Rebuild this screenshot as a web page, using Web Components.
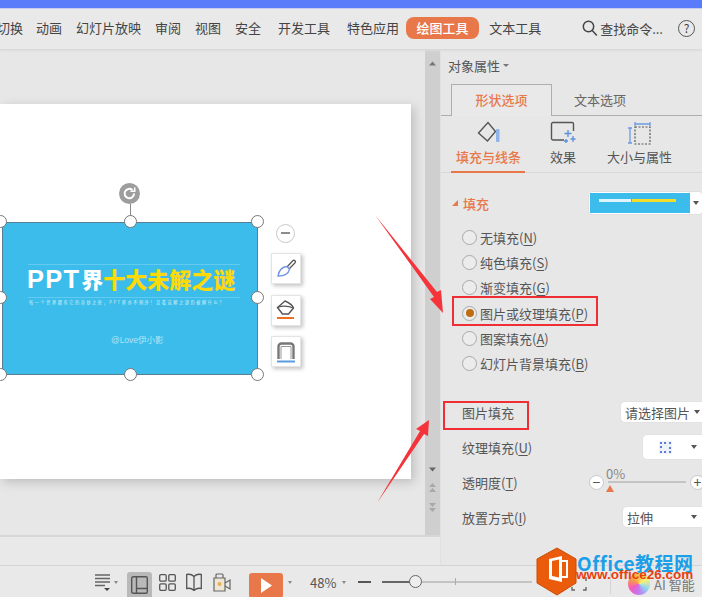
<!DOCTYPE html>
<html>
<head>
<meta charset="utf-8">
<style>
  html, body { margin: 0; padding: 0; background: #e7e7e7; }
  body { font-family: "Noto Sans CJK SC", "Noto Sans", sans-serif; color: #444; }
</style>
</head>
<body>
<wps-app>
  <ribbon-bar slot="ribbon"></ribbon-bar>
  <slide-canvas slot="canvas"></slide-canvas>
  <scroll-rail slot="rail"></scroll-rail>
  <property-panel slot="panel"></property-panel>
  <status-bar slot="status"></status-bar>
  <callout-layer slot="overlay"></callout-layer>
</wps-app>

<script>
const ORANGE = "#e8784a";

function define(name, html, setup) {
  const template = document.createElement("template");
  template.innerHTML = html;
  customElements.define(name, class extends HTMLElement {
    constructor() {
      super();
      const shadow = this.attachShadow({ mode: "open" });
      shadow.append(template.content.cloneNode(true));
      if (setup) setup(shadow, this);
    }
  });
}

define("wps-app", `
  <style>
    :host { display: flex; flex-direction: column; width: 702px; height: 597px; overflow: hidden; position: relative; background: #e7e7e7; }
    .title { height: 9px; flex: none; background: #5a7cfb; border-bottom: 1px solid #c4cdf0; box-sizing: border-box; }
    .main { display: flex; height: 515px; flex: none; }
    .left { width: 440px; flex: none; display: flex; flex-direction: column; }
    .work { display: flex; height: 485px; flex: none; }
    .notes { flex: 1; border-top: 2px solid #d6d6d6; background: #e9e9e9; }
  </style>
  <div class="title"></div>
  <slot name="ribbon"></slot>
  <div class="main">
    <div class="left">
      <div class="work"><slot name="canvas"></slot><slot name="rail"></slot></div>
      <div class="notes"></div>
    </div>
    <slot name="panel"></slot>
  </div>
  <slot name="status"></slot>
  <slot name="overlay"></slot>
`);

define("ribbon-bar", `
  <style>
    :host { display: flex; align-items: center; height: 41px; flex: none; box-sizing: border-box; padding-bottom: 2px; background: #e9e9e9; border-bottom: 1px solid #d9d9d9; box-shadow: 0 1px 2px #dcdcdc; font-size: 13px; color: #444; position: relative; white-space: nowrap; }
    .tabs { display: flex; align-items: center; margin-left: -3px; }
    .tabs span { display: block; line-height: 18px; }
    .pill { background: ${ORANGE}; color: #fff; border-radius: 8px; height: 22px; line-height: 22px !important; padding: 0 10.5px; font-weight: 500; }
    .search { display: flex; align-items: center; gap: 2px; margin-left: 41px; }
    .help { margin-left: 15px; width: 17px; height: 17px; border: 1.5px solid #555; border-radius: 50%; box-sizing: border-box; font-size: 12px; line-height: 14px; text-align: center; }
    svg { display: block; }
  </style>
  <div class="tabs">
    <span style="width:25px">切换</span>
    <span style="margin-left:14px">动画</span>
    <span style="margin-left:14px">幻灯片放映</span>
    <span style="margin-left:14px">审阅</span>
    <span style="margin-left:14px">视图</span>
    <span style="margin-left:14px">安全</span>
    <span style="margin-left:17px">开发工具</span>
    <span style="margin-left:17px">特色应用</span>
    <span class="pill" style="margin-left:7px">绘图工具</span>
    <span style="margin-left:10px">文本工具</span>
  </div>
  <div class="search">
    <svg width="16" height="17" viewBox="0 0 16 17" fill="none" stroke="#444" stroke-width="1.5"><circle cx="6.5" cy="6.5" r="5.2"/><path d="M10.3 10.5l4.5 5"/></svg>
    <span>查找命令...</span>
  </div>
  <div class="help">?</div>
`);

define("shape-tool", `
  <style>
    :host { display: flex; width: 30px; height: 31px; align-items: center; justify-content: center; box-sizing: border-box; background: #fff; border: 1px solid #e4e4e4; box-shadow: 2px 2px 4px #c4c4c4; }
    svg { display: block; }
  </style>
  <slot></slot>
`);

define("slide-canvas", `
  <style>
    :host { display: block; width: 425px; flex: none; box-sizing: border-box; padding-top: 54px; background: #e7e7e7; }
    .slide { position: relative; width: 411px; height: 375px; background: #fff; box-shadow: 3px 3px 10px #bcbcbc; }
    .shape { position: absolute; left: 2px; top: 118px; width: 256px; height: 153px; box-sizing: border-box; background: #3bbcea; border: 1px solid #5a7f92; color: #fff; }
    .rule { position: absolute; left: 25px; width: 212px; height: 1px; background: #63cbef; }
    .headline { position: absolute; left: 24px; top: 41px; width: 225px; font-size: 22px; line-height: 28px; font-weight: 900; white-space: nowrap; font-family: "Noto Sans CJK SC", sans-serif; }
    .headline b { font-size: 25.5px; letter-spacing: 1.2px; font-family: "Liberation Sans", sans-serif; font-weight: 700; margin-right: 1px; }
    .headline i { font-style: normal; color: #fbd90a; }
    .sub { position: absolute; left: 26px; top: 76px; font-size: 4.2px; line-height: 6px; letter-spacing: 1.55px; white-space: nowrap; color: #d6f1fb; }
    .by { position: absolute; left: 108px; top: 111px; font-size: 8.5px; line-height: 12px; color: #b5e4f6; white-space: nowrap; font-family: "Liberation Sans", "Noto Sans CJK SC", sans-serif; }
    .dot { position: absolute; width: 13px; height: 13px; margin: -6.5px 0 0 -6.5px; border-radius: 50%; box-sizing: border-box; border: 1px solid #777; background: #fff; }
    .stem { position: absolute; left: 130px; top: 100px; width: 1px; height: 18px; background: #8a8a8a; }
    .rot { position: absolute; left: 119px; top: 79px; width: 21px; height: 21px; border-radius: 50%; background: #9d9d9d; }
    .minus { position: absolute; left: 276px; top: 120px; width: 19px; height: 19px; box-sizing: border-box; border: 1px solid #c9c9c9; border-radius: 50%; background: #fff; }
    .minus::after { content: ""; position: absolute; left: 4px; right: 4px; top: 7px; height: 2px; background: #8d8d8d; }
    .tools { position: absolute; left: 271px; top: 149px; display: flex; flex-direction: column; gap: 10.5px; }
  </style>
  <div class="slide">
    <div class="shape">
      <div class="rule" style="top:41px"></div>
      <div class="headline"><b>PPT</b>界<i>十大未解之谜</i></div>
      <div class="rule" style="top:74px"></div>
      <div class="sub">每一个世界都有它的奇妙之处，PPT界亦不例外！且看这解之谜仍被解什么？</div>
      <div class="by">@Love伊小影</div>
    </div>
    <div class="stem"></div>
    <div class="rot">
      <svg width="21" height="21" viewBox="0 0 21 21" fill="none" stroke="#fff" stroke-width="2"><path d="M15 10.5a4.7 4.7 0 1 1-1.6-3.5"/><path d="M11.5 8.2h4.2V4.4" stroke-width="1.6"/></svg>
    </div>
    <div class="dot" style="left:0;top:117px"></div>
    <div class="dot" style="left:130px;top:117px"></div>
    <div class="dot" style="left:257px;top:117px"></div>
    <div class="dot" style="left:0;top:193px"></div>
    <div class="dot" style="left:257px;top:193px"></div>
    <div class="dot" style="left:0;top:270px"></div>
    <div class="dot" style="left:130px;top:270px"></div>
    <div class="dot" style="left:257px;top:270px"></div>
    <div class="minus"></div>
    <div class="tools">
      <shape-tool>
        <svg width="22" height="22" viewBox="0 0 22 22" fill="none"><path d="M12 9l6-6.500a1.600 1.600 0 0 1 2.200 2.200L14 11" stroke="#555" stroke-width="1.300"/><path d="M12 8.500l2.500 2.800c-.8 3.700-4.700 6.500-11.500 6.700 1-5.500 4.300-9.300 9-9.500z" stroke="#6f93e6" stroke-width="1.300"/></svg>
      </shape-tool>
      <shape-tool>
        <svg width="22" height="22" viewBox="0 0 22 22" fill="none"><path d="M10 2L2.500 8.500l5 6.500h6l5-6c-1-3-4-5-8.500-7z" stroke="#555" stroke-width="1.400"/><path d="M2.500 8.500c5-2 11-1.500 16 .5" stroke="#555" stroke-width="1.200"/><path d="M2 19h17" stroke="#f0701e" stroke-width="2"/></svg>
      </shape-tool>
      <shape-tool>
        <svg width="22" height="24" viewBox="0 0 22 24" fill="none"><path d="M3.500 19V6.500a3 3 0 0 1 3-3h9a3 3 0 0 1 3 3V19" stroke="#777" stroke-width="2.400"/><path d="M6 19V6.500h10V19" stroke="#999" stroke-width="1"/><path d="M2 21.500h18" stroke="#5b9be0" stroke-width="2"/></svg>
      </shape-tool>
    </div>
  </div>
`);

define("scroll-rail", `
  <style>
    :host { display: flex; flex-direction: column; align-items: center; width: 15px; flex: none; background: #cfcfcf; padding-top: 11px; box-sizing: border-box; }
    svg { display: block; }
    .low { margin-top: auto; margin-bottom: 22px; display: flex; flex-direction: column; gap: 10.5px; align-items: center; }
  </style>
  <svg width="7" height="5" viewBox="0 0 7 5"><path d="M3.500 0.500L7 4.500H0z" fill="#777"/></svg>
  <div class="low">
    <svg width="7" height="5" viewBox="0 0 7 5"><path d="M3.500 4.500L7 .5H0z" fill="#666"/></svg>
    <svg width="7" height="10" viewBox="0 0 7 10"><path d="M3.500 0L7 4H0zM3.500 5L7 9H0z" fill="#a8a8a8"/></svg>
    <svg width="7" height="10" viewBox="0 0 7 10"><path d="M3.500 9L7 5H0zM3.500 4L7 0H0z" fill="#a8a8a8"/></svg>
  </div>
`);

define("fill-radio", `
  <style>
    :host { display: flex; align-items: center; height: 25.2px; gap: 3px; font-size: 13px; color: #555; white-space: nowrap; }
    .ring { width: 15px; height: 15px; box-sizing: border-box; border: 1.5px solid #a9a9a9; border-radius: 50%; background: #ececec; display: flex; align-items: center; justify-content: center; flex: none; }
    :host([checked]) .ring::after { content: ""; width: 8px; height: 8px; border-radius: 50%; background: #bf6d10; }
    ::slotted(u) { text-underline-offset: 2px; }
  </style>
  <span class="ring"></span>
  <span><slot></slot></span>
`);

define("drop-select", `
  <style>
    :host { display: flex; align-items: center; box-sizing: border-box; margin-right: -8px; height: 22px; background: #fff; border: 1px solid #e2e2e2; border-radius: 5px; font-size: 13px; color: #555; padding-left: 4px; white-space: nowrap; }
    .grow { flex: 1; display: flex; align-items: center; }
    .caret { width: 0; height: 0; border: 3.500px solid transparent; border-top: 4px solid #555; border-bottom: 0; margin: 0 12px 0 4px; }
  </style>
  <span class="grow"><slot></slot></span>
  <span class="caret"></span>
`);

define("prop-row", `
  <style>
    :host { display: flex; align-items: center; justify-content: space-between; font-size: 13px; color: #555; white-space: nowrap; }
    .ctl { display: block; }
  </style>
  <span><slot name="label"></slot></span>
  <span class="ctl"><slot></slot></span>
`);

define("opacity-slider", `
  <style>
    :host { display: block; position: relative; width: 116px; height: 26px; font-size: 13px; color: #888; margin-right: -3px; }
    .btn { position: absolute; top: 6px; width: 15px; height: 15px; box-sizing: border-box; background: #fff; border: 1px solid #c8c8c8; border-radius: 50%; color: #555; font-size: 14px; line-height: 12px; text-align: center; }
    .track { position: absolute; left: 19px; right: 19px; top: 12px; height: 2px; background: #c4c4c4; }
    .val { position: absolute; left: 17px; top: -3px; line-height: 16px; }
    .thumb { position: absolute; left: 17px; top: 16px; width: 0; height: 0; border: 4.500px solid transparent; border-bottom: 7px solid ${ORANGE}; border-top: 0; }
  </style>
  <span class="btn" style="left:0">−</span>
  <span class="track"></span>
  <span class="val">0%</span>
  <span class="thumb"></span>
  <span class="btn" style="right:0">+</span>
`);

define("property-panel", `
  <style>
    :host { display: block; width: 262px; flex: none; box-sizing: border-box; background: #e7e7e7; overflow: hidden; font-size: 13px; color: #555; border-left: 1px solid #e0e0e0; }
    .head { height: 34px; padding: 0 0 4px 7px; box-sizing: border-box; display: flex; align-items: center; gap: 3px; color: #555; }
    .caret { width: 0; height: 0; border: 3px solid transparent; border-top: 3.500px solid #777; border-bottom: 0; }
    .tabs { display: flex; height: 32px; border-bottom: 1px solid #aeaeae; box-sizing: border-box; }
    .tab { box-sizing: border-box; height: 32px; width: 101px; margin-left: 10px; border: 1px solid #aeaeae; border-bottom: 0; background: #e9e9e9; color: ${ORANGE}; text-align: center; line-height: 29px; font-weight: 500; }
    .tab2 { margin-left: 22px; line-height: 31px; color: #666; }
    .subs { display: flex; height: 57px; border-bottom: 1px solid #d8d8d8; box-sizing: border-box; position: relative; }
    .sub { display: flex; flex-direction: column; align-items: center; position: absolute; top: 5px; white-space: nowrap; line-height: 18px; }
    .sub svg { display: block; height: 24px; margin-bottom: 3px; }
    .on { color: ${ORANGE}; font-weight: 500; }
    .bar { position: absolute; left: 10px; width: 74px; bottom: -1px; height: 2px; background: ${ORANGE}; }
    .fill { display: flex; align-items: center; height: 24px; margin-top: 18px; padding-left: 11px; color: ${ORANGE}; font-weight: 500; white-space: nowrap; }
    .tri { width: 0; height: 0; border-left: 6px solid transparent; border-bottom: 6px solid ${ORANGE}; margin-right: 5px; flex: none; }
    .preview { display: flex; align-items: center; margin-left: 99px; width: 115px; height: 24px; flex: none; background: #fff; border: 1px solid #e0e0e0; border-radius: 4px; box-sizing: border-box; padding-left: 1px; }
    .thumb { position: relative; display: block; width: 100px; height: 20px; flex: none; background: #3bbcea; }
    .thumb span { position: absolute; top: 6px; height: 3px; }
    .pcaret { width: 0; height: 0; border: 3.500px solid transparent; border-top: 4px solid #555; border-bottom: 0; margin-left: 3px; flex: none; }
    .radios { margin: 10px 0 0 21px; }
    .rows { margin: 0 0 0 21px; display: grid; row-gap: 9px; padding-top: 23px; }
    .rows prop-row { height: 26px; }
    u { text-underline-offset: 2px; }
  </style>
  <div class="head">对象属性<span class="caret"></span></div>
  <div class="tabs">
    <div class="tab">形状选项</div>
    <div class="tab2">文本选项</div>
  </div>
  <div class="subs">
    <div class="sub on" style="left:15px">
      <svg width="24" height="24" viewBox="0 0 24 24" fill="none"><path d="M1.500 12L11 1.500l7.500 9-8 9.500z" stroke="#555" stroke-width="1.400"/><rect x="19" y="8" width="3.500" height="13" rx="1" fill="#8fb4ea"/></svg>
      填充与线条
    </div>
    <div class="sub" style="left:109px">
      <svg width="26" height="24" viewBox="0 0 26 24" fill="none"><path d="M14 19H3a1.500 1.500 0 0 1-1.500-1.500V3A1.500 1.500 0 0 1 3 1.500h19A1.500 1.500 0 0 1 23.500 3v7" stroke="#555" stroke-width="1.400"/><path d="M18 9v7M14.500 12.500h7M23 15v6M20.500 18h5M16 18v4M14 20h4" stroke="#5b8fe0" stroke-width="1.300"/></svg>
      效果
    </div>
    <div class="sub" style="left:166px">
      <svg width="24" height="24" viewBox="0 0 24 24" fill="none"><path d="M7 2h15M7 0v4M22 0v4" stroke="#6d9ae2" stroke-width="1.300" transform="translate(0 1)"/><path d="M2 7v15M0 7h4M0 22h4" stroke="#6d9ae2" stroke-width="1.300"/><rect x="7" y="6" width="15" height="17" stroke="#555" stroke-width="1.200" stroke-dasharray="2 1.500"/></svg>
      大小与属性
    </div>
    <div class="bar"></div>
  </div>
  <div class="fill">
    <span class="tri"></span>填充
    <span class="preview">
      <span class="thumb">
        <span style="left:9px;width:32px;background:#dff4fc"></span>
        <span style="left:42px;width:44px;background:#f4dc2a"></span>
      </span>
      <span class="pcaret"></span>
    </span>
  </div>
  <div class="radios">
    <fill-radio>无填充(<u>N</u>)</fill-radio>
    <fill-radio>纯色填充(<u>S</u>)</fill-radio>
    <fill-radio>渐变填充(<u>G</u>)</fill-radio>
    <fill-radio checked>图片或纹理填充(<u>P</u>)</fill-radio>
    <fill-radio>图案填充(<u>A</u>)</fill-radio>
    <fill-radio>幻灯片背景填充(<u>B</u>)</fill-radio>
  </div>
  <div class="rows">
    <prop-row><span slot="label">图片填充</span><drop-select style="width:90px">请选择图片</drop-select></prop-row>
    <prop-row><span slot="label">纹理填充(<u>U</u>)</span>
      <drop-select style="width:68px;height:26px">
        <svg width="13" height="13" viewBox="0 0 13 13" style="margin-left:12px"><rect width="13" height="13" fill="#eef2fb"/><path d="M1 1h2v2H1zM5 1h2v2H5zM10 1h2v2h-2zM1 5h2v2H1zM10 6h2v2h-2zM1 10h2v2H1zM5 10h2v2H5zM10 10h2v2h-2z" fill="#5b7fd8"/></svg>
      </drop-select>
    </prop-row>
    <prop-row><span slot="label">透明度(<u>T</u>)</span><opacity-slider></opacity-slider></prop-row>
    <prop-row><span slot="label">放置方式(<u>I</u>)</span><drop-select style="width:88px">拉伸</drop-select></prop-row>
  </div>
`);

define("status-bar", `
  <style>
    :host { display: flex; align-items: center; height: 33px; flex: none; box-sizing: border-box; background: #e9e9e9; border-top: 1px solid #d4d4d4; padding: 0 0 0 95px; font-size: 13px; color: #555; white-space: nowrap; position: relative; }
    svg { display: block; flex: none; }
    .small { width: 0; height: 0; border: 2.500px solid transparent; border-top: 3px solid #888; border-bottom: 0; }
    .view { width: 25px; height: 26px; margin-top: 6px; background: #b9b9b9; border-radius: 3px 3px 0 0; display: flex; align-items: center; justify-content: center; }
    .play { width: 34px; height: 25px; margin: 6px 0 0 18px; background: ${ORANGE}; border-radius: 3px; display: flex; align-items: center; justify-content: center; }
    .dash { width: 13px; height: 2.500px; background: #555; margin-left: 12px; }
    .slider { position: relative; width: 150px; height: 2px; background: #c4c4c4; margin-left: 11px; }
    .slider::before { content: ""; position: absolute; left: 0; width: 28px; top: 0; height: 2px; background: #666; }
    .slider::after { content: ""; position: absolute; left: 73px; top: -3px; width: 1px; height: 7px; background: #aaa; }
    .knob { position: absolute; left: 27px; top: -6px; width: 13px; height: 13px; border: 1.500px solid #666; background: #eee; border-radius: 50%; box-sizing: border-box; }
    .ai { position: absolute; left: 654px; top: 9px; color: #777; font-size: 13px; line-height: 19px; }
    .orb { position: absolute; left: 628px; top: 7px; width: 22px; height: 22px; border-radius: 50%; background: conic-gradient(#f7c94a, #f7f07a, #8fd7ef, #c07af0, #f25bc0, #f79a4a, #f7c94a); }
    .split { position: absolute; left: 610px; top: 4px; width: 1px; height: 24px; background: #d4d4d4; }
    .frame { position: absolute; left: 571px; top: 11px; }
  </style>
  <svg width="17" height="18" viewBox="0 0 17 18" fill="none" stroke="#666" stroke-width="1.400"><path d="M0 2h15M0 5.500h15M0 9h15M0 12.500h10"/><path d="M9 15h6l-3 3z" fill="#444" stroke="none"/></svg>
  <span class="small" style="margin-left:2px"></span>
  <span class="view" style="margin-left:9px">
    <svg width="17" height="18" viewBox="0 0 17 18" fill="none" stroke="#555" stroke-width="1.400"><rect x=".7" y=".7" width="15.600" height="16.600" rx="1.500"/><path d="M5.500 1v16M5.500 12.500h11" /></svg>
  </span>
  <svg style="margin-left:7px" width="17" height="17" viewBox="0 0 17 17" fill="none" stroke="#555" stroke-width="1.300"><rect x=".7" y=".7" width="6.500" height="6.500" rx="1.200"/><rect x="9.800" y=".7" width="6.500" height="6.500" rx="1.200"/><rect x=".7" y="9.800" width="6.500" height="6.500" rx="1.200"/><rect x="9.800" y="9.800" width="6.500" height="6.500" rx="1.200"/></svg>
  <svg style="margin-left:10px" width="16" height="18" viewBox="0 0 16 18" fill="none" stroke="#555" stroke-width="1.300"><path d="M8 3.500C6 1.500 3 1 .7 1.500v14c2.300-.5 5.300 0 7.300 2 2-2 5-2.500 7.300-2v-14C13 1 10 1.500 8 3.500zM8 3.500v14"/></svg>
  <svg style="margin-left:11px" width="18" height="20" viewBox="0 0 18 20" fill="none" stroke="#666" stroke-width="1.200"><path d="M1 6h11v13H1z" fill="#efe7d6"/><path d="M3 6V3a1 1 0 0 1 1-1h5a1 1 0 0 1 1 1v3" /><path d="M12 11l5-3v9l-5-3"/><circle cx="6.500" cy="12" r="2" fill="#e6b04a" stroke="none"/></svg>
  <span class="play">
    <svg width="12" height="15" viewBox="0 0 12 15"><path d="M1 0l11 7.500L1 15z" fill="#fff"/></svg>
  </span>
  <span class="small" style="margin-left:5px"></span>
  <span style="margin-left:18px">48%</span>
  <span class="small" style="margin-left:6px"></span>
  <span class="dash"></span>
  <span class="slider"><span class="knob"></span></span>
  <span class="frame">
    <svg width="16" height="14" viewBox="0 0 16 14" fill="none" stroke="#666" stroke-width="1.400"><path d="M1 4V1h3M12 1h3v3M15 10v3h-3M4 13H1v-3"/></svg>
  </span>
  <span class="split"></span>
  <span class="orb"></span>
  <span class="ai">AI 智能</span>
`);

define("callout-layer", `
  <style>
    :host { display: block; position: absolute; inset: 0; pointer-events: none; }
    .box { position: absolute; box-sizing: border-box; border: 2px solid #ef2f35; }
    svg { position: absolute; left: 0; top: 0; }
    .brand { position: absolute; left: 577px; top: 548px; font-family: "Noto Sans CJK SC", "Noto Sans", sans-serif; font-weight: 700; font-size: 19px; line-height: 30px; color: #1b9fe8; white-space: nowrap; letter-spacing: 0.5px; }
    .site { position: absolute; left: 576px; top: 566px; font-family: "Liberation Sans", sans-serif; font-weight: 700; font-size: 13.5px; line-height: 18px; color: #e8400f; white-space: nowrap; }
  </style>
  <div class="box" style="left:452px;top:296px;width:146px;height:30px"></div>
  <div class="box" style="left:443px;top:401px;width:86px;height:29px"></div>
  <svg width="702" height="597" viewBox="0 0 702 597">
    <path d="M375 215L437 292l4-2 2 23-13-14 4-2z" fill="#f4343a"/>
    <path d="M377 503L420 431l-4-2 13-9-1 16-4-2z" fill="#f4343a"/>
    <path d="M557 548l19 11v24l-19 12-20-12v-24z" fill="#ea5c0c" stroke="#c94c06" stroke-width="1"/>
    <path d="M549 559l13-3v26l-13-3zM552 561v15l7 1.500V559.500z" fill="#fff" fill-rule="evenodd"/>
    <path d="M562 560h6v18h-6v-2h4v-14h-4z" fill="#fff"/>
  </svg>
  <div class="brand">Office教程网</div>
  <div class="site">www.office26.com</div>
`);
</script>
</body>
</html>
